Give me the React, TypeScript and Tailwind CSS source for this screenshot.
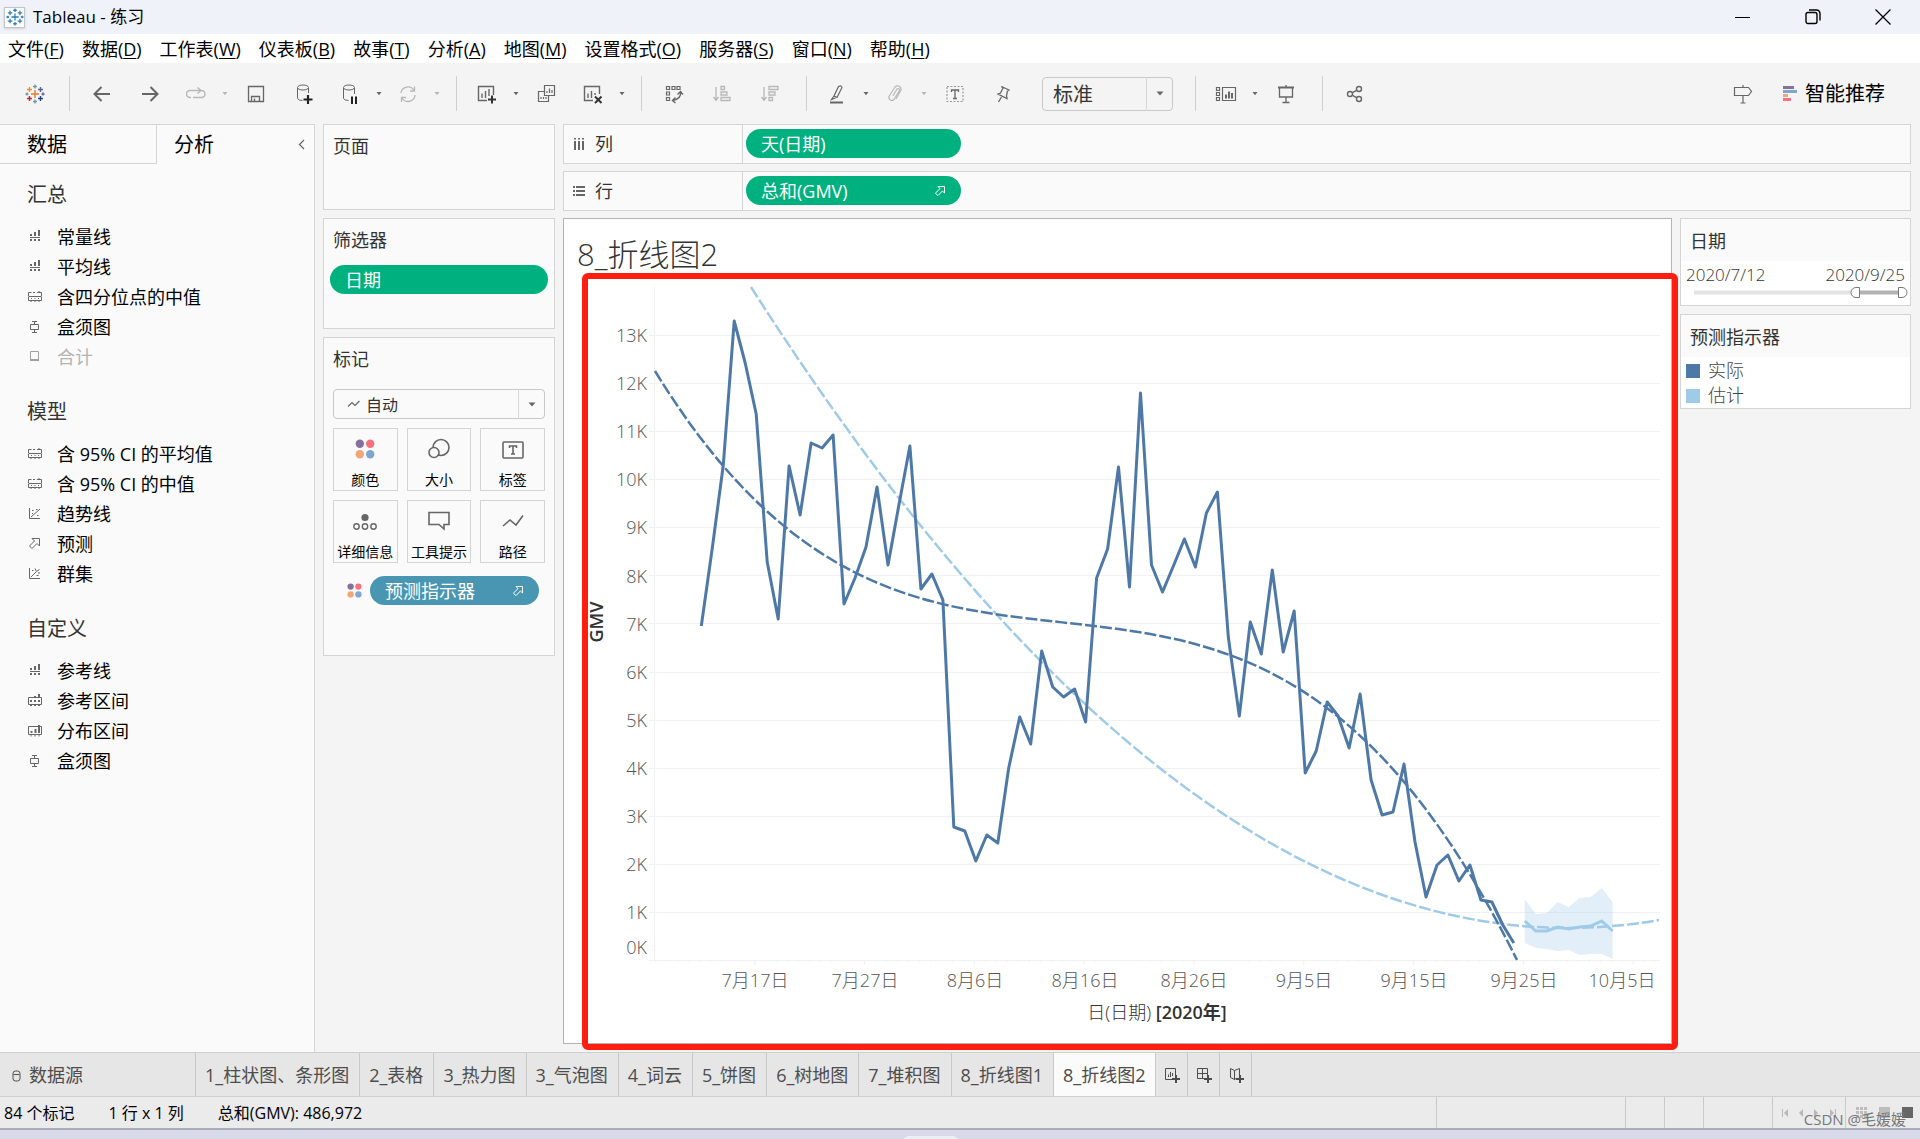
import { useState } from "react";
import type { ReactNode } from "react";

const menus = [
  ["文件", "F"],
  ["数据", "D"],
  ["工作表", "W"],
  ["仪表板", "B"],
  ["故事", "T"],
  ["分析", "A"],
  ["地图", "M"],
  ["设置格式", "O"],
  ["服务器", "S"],
  ["窗口", "N"],
  ["帮助", "H"],
];

const analytics = [
  {
    title: "汇总",
    items: [
      ["bars", "常量线"],
      ["bars", "平均线"],
      ["box", "含四分位点的中值"],
      ["whisker", "盒须图"],
      ["total", "合计"],
    ],
  },
  {
    title: "模型",
    items: [
      ["box", "含 95% CI 的平均值"],
      ["box", "含 95% CI 的中值"],
      ["trend", "趋势线"],
      ["forecast", "预测"],
      ["cluster", "群集"],
    ],
  },
  {
    title: "自定义",
    items: [
      ["bars", "参考线"],
      ["band", "参考区间"],
      ["dist", "分布区间"],
      ["whisker", "盒须图"],
    ],
  },
];

const sheets = [
  "1_柱状图、条形图",
  "2_表格",
  "3_热力图",
  "3_气泡图",
  "4_词云",
  "5_饼图",
  "6_树地图",
  "7_堆积图",
  "8_折线图1",
  "8_折线图2",
];

/* One y position per day, starting at 2020/7/12 */
const actual = [
  626, 548, 465, 321, 363, 414, 562, 619, 466, 515, 443, 448, 435, 604, 578,
  547, 487, 565, 505, 446, 589, 574, 600, 827, 831, 861, 835, 843, 768, 717,
  744, 651, 687, 697, 689, 722, 578, 549, 467, 587, 393, 565, 592, 566, 539,
  567, 513, 492, 637, 716, 622, 654, 570, 652, 611, 773, 751, 702, 716, 748,
  694, 780, 815, 812, 764, 842, 897, 865, 855, 881, 865, 900, 902, 925, 943,
];
const estimate = [921, 931, 931, 927, 929, 927, 926, 921, 931];
const upper = [899, 914, 913, 902, 907, 898, 897, 888, 902];
const lower = [943, 948, 949, 951, 950, 955, 954, 954, 959];

const dayX = (day: number) => 701.3 + day * 10.98;
const toPoints = (ys: number[], start = 0) =>
  ys.map((y, i) => `${dayX(start + i).toFixed(1)},${y}`);

const dateTicks = [
  [755, "7月17日"],
  [865, "7月27日"],
  [975, "8月6日"],
  [1085, "8月16日"],
  [1194, "8月26日"],
  [1304, "9月5日"],
  [1414, "9月15日"],
  [1524, "9月25日"],
  [1622, "10月5日"],
] as const;

function Svg({ w = 20, h = 20, className = "", children }: { w?: number; h?: number; className?: string; children: ReactNode }) {
  return (
    <svg
      width={w}
      height={h}
      viewBox={`0 0 ${w} ${h}`}
      fill="none"
      stroke="currentColor"
      className={"shrink-0 " + className}
      aria-hidden="true"
    >
      {children}
    </svg>
  );
}

function Tool({ label, caret, faded, children }: { label: string; caret?: boolean; faded?: boolean; children: ReactNode }) {
  const color = faded ? "text-[#b8b8b8]" : "text-[#666666]";
  return (
    <>
      <button
        aria-label={label}
        className={"flex h-9 items-center justify-center " + color + (caret ? " w-11" : " w-12")}
      >
        {children}
      </button>
      {caret && (
        <button aria-label={label + "选项"} className={"flex h-9 w-3.5 items-center justify-center " + color}>
          <Caret />
        </button>
      )}
    </>
  );
}

function Caret({ large }: { large?: boolean }) {
  return (
    <Svg w={8} h={5}>
      <path d={large ? "M.5.5h7L4 4.5z" : "M1.5 1h5L4 4.2z"} fill="currentColor" stroke="none" />
    </Svg>
  );
}

function Divider() {
  return <div className="mr-2 ml-3 h-[35px] w-px bg-[#d0d0d0]" />;
}

const crossCells = [
  [10, 10, 4, "#e8762c"],
  [4.5, 5.5, 2.5, "#eb912b"],
  [15.5, 5.5, 2.5, "#5c6692"],
  [4.5, 14.5, 2.5, "#c72035"],
  [15.5, 14.5, 2.5, "#1f447e"],
  [10, 2.5, 2, "#7199a6"],
  [10, 17.5, 2, "#7199a6"],
  [2, 10, 1.5, "#7199a6"],
  [18, 10, 1.5, "#5c6692"],
] as const;

function TableauLogo({ mono }: { mono?: boolean }) {
  return (
    <Svg className={mono ? "h-[18px] w-[18px]" : ""}>
      {crossCells.map(([x, y, r, color]) => (
        <path
          key={`${x}-${y}`}
          d={`M${x - r} ${y}h${r * 2}M${x} ${y - r}v${r * 2}`}
          stroke={mono ? "#2f80b5" : color}
          strokeWidth="1.4"
        />
      ))}
    </Svg>
  );
}

function ForecastIcon() {
  return (
    <Svg w={12} h={12}>
      <path d="M4 1.5h6.5V8L8.4 6 4 10.6 1.4 8.2 6 3.6z" />
    </Svg>
  );
}

function ColorDots({ small }: { small?: boolean }) {
  return (
    <Svg className={small ? "h-[15px] w-[15px]" : ""}>
      <g stroke="none">
        <circle cx="4.8" cy="4.8" r="4.2" fill="#86709c" />
        <circle cx="15.2" cy="4.8" r="4.2" fill="#f9707f" />
        <circle cx="4.8" cy="15.2" r="4.2" fill="#f2a577" />
        <circle cx="15.2" cy="15.2" r="4.2" fill="#80a5cf" />
      </g>
    </Svg>
  );
}

function AnalyticsIcon({ kind }: { kind: string }) {
  return (
    <Svg w={14} h={14}>
      {kind === "bars" && (
        <>
          <path d="M2 7.5h10" />
          <path d="M3 4v2M7 2v4M11 0v6M3 9v2M7 9v2M11 9v2" strokeWidth="2" />
        </>
      )}
      {kind === "box" && (
        <path d="M.5 6V2.5h3M5 2.5h2M9 2.5h4.5V6M.5 6.5h13M.5 7v3.5h13V7M3 8.5h1M6.5 8.5h1M10 8.5h1M3 10v2M7 10v2M11 10v2M11 1v2" />
      )}
      {kind === "band" && (
        <>
          <path d="M.5 3.5h13v7H.5z" />
          <path d="M3 6v2M7 6v2M11 6v2M7 2v2M11 0v4M3 10v2M7 10v2M11 10v2" strokeWidth="2" />
        </>
      )}
      {kind === "dist" && (
        <>
          <path d="M.5 2.5h13v8H.5zM3 11v1.5M7 11v1.5M11 11v1.5" />
          <path d="M3.5 7v2M7.5 5v4M11 1v8" strokeWidth="2" />
        </>
      )}
      {kind === "whisker" && <path d="M4 1.5h5M6.5 1.5V4M2.5 4.5h8v5h-8zM6.5 10v2M4 12.5h5" />}
      {kind === "total" && (
        <>
          <path d="M2.5 1.5h8v9h-8z" />
          <path d="M2 9h9v2H2z" fill="currentColor" stroke="none" />
        </>
      )}
      {kind === "trend" && <path d="M1.5 1v10.5H12M3 10l9-8M4 3.5h1.5M8 2.5h1.5M9 8.5h1.5M4 6.5h1" />}
      {kind === "cluster" && <path d="M1.5 1v10.5H12M3 10l5-5M4 3.5h1.5M7 1.5l1.5 3 3-2M10 6h2M8.5 8.5h2" />}
      {kind === "forecast" && <path d="M4 1.5h7.5V9L9 6.5l-5 5L1.5 9l5-5z" />}
    </Svg>
  );
}

function TitleBar() {
  return (
    <header className="flex h-[34px] items-center bg-[#f0f2f9] pl-1">
      <div className="flex h-[21px] w-[21px] items-center justify-center border border-[#c4c4c4] bg-white shadow">
        <TableauLogo mono />
      </div>
      <h1 className="ml-2 flex-1 text-[17px]">Tableau - 练习</h1>
      <div className="flex pr-[2px]">
        <button aria-label="最小化" className="flex h-8 w-[70px] items-center justify-center">
          <Svg w={16}>
            <path d="M0 10.5h15" />
          </Svg>
        </button>
        <button aria-label="还原" className="flex h-8 w-[70px] items-center justify-center">
          <Svg w={16} h={18}>
            <rect x="1" y="4.5" width="11" height="11" rx="2" strokeWidth="1.4" />
            <path d="M4 2h7.5a3.5 3.5 0 0 1 3.5 3.5v7" strokeWidth="1.4" />
          </Svg>
        </button>
        <button aria-label="关闭" className="flex h-8 w-[70px] items-center justify-center">
          <Svg w={16} h={16}>
            <path d="M.5.5l15 15M15.5.5l-15 15" strokeWidth="1.3" />
          </Svg>
        </button>
      </div>
    </header>
  );
}

function MenuBar() {
  return (
    <nav className="flex h-[29px] items-center gap-[18px] bg-white pl-2 text-[18px]">
      {menus.map(([name, key]) => (
        <button key={name} className="leading-[28px]">
          {name}(<span className="underline underline-offset-2">{key}</span>)
        </button>
      ))}
    </nav>
  );
}

function Toolbar() {
  return (
    <div className="flex h-[61px] items-center bg-[#f4f4f4]">
      <button aria-label="开始页面" className="flex h-9 w-[69px] items-center justify-center">
        <TableauLogo />
      </button>
      <div className="mr-2 h-[35px] w-px bg-[#d0d0d0]" />
      <Tool label="撤销">
        <Svg>
          <path d="M18 10H3M9.5 3L2.5 10l7 7" strokeWidth="2" />
        </Svg>
      </Tool>
      <Tool label="重做">
        <Svg>
          <path d="M2 10h15M10.5 3l7 7-7 7" strokeWidth="2" />
        </Svg>
      </Tool>
      <Tool label="重播" caret faded>
        <Svg>
          <path d="M5 13.5H4A3 3 0 0 1 4 6.5h10M15.5 6.5a3.5 3.5 0 0 1 0 7H7M11.5 3.5l3.5 3-3.5 3" strokeWidth="1.5" />
        </Svg>
      </Tool>
      <Tool label="保存">
        <Svg w={18} h={18}>
          <path d="M1.5 1.5h15v15h-15zM4.5 16.5v-5h8v5M7.5 13.5v3" strokeWidth="1.3" />
        </Svg>
      </Tool>
      <Tool label="新建数据源">
        <Svg w={20} h={22}>
          <ellipse cx="9" cy="4.5" rx="5.5" ry="2.5" />
          <path d="M3.5 5v10.5q1 2 5 2M14.5 5v5" />
          <path d="M9.5 16.5h9M14 12v9" stroke="#222" strokeWidth="2.2" />
        </Svg>
      </Tool>
      <Tool label="暂停自动更新" caret>
        <Svg w={20} h={22}>
          <ellipse cx="9" cy="4.5" rx="5.5" ry="2.5" />
          <path d="M3.5 5v10.5q1 2 5 2M14.5 5v6" />
          <path d="M12 13.5V21M16 13.5V21" stroke="#222" strokeWidth="2" />
        </Svg>
      </Tool>
      <Tool label="刷新" caret faded>
        <Svg>
          <path d="M3 9a7 7 0 0 1 13-2.5M17 11a7 7 0 0 1-13 3M16.5 2.5v4.5H12M3.5 18v-4.5H8" strokeWidth="1.3" />
        </Svg>
      </Tool>
      <Divider />
      <Tool label="新建工作表" caret>
        <Svg w={22} h={20}>
          <path d="M11 16.5H2.5v-14h15V11M6 9.5v4.5M9.5 7v7M13 5v7" strokeWidth="1.4" />
          <path d="M12 15.5h8M16 11.5v8" stroke="#333" strokeWidth="2" />
        </Svg>
      </Tool>
      <Tool label="复制">
        <Svg>
          <path d="M7.5 1.5h10v10h-10zM7 7.5H1.5v10h10v-6M10 9V7M12.5 9V4.5M15 9V6M4 15v-2M6.5 15v-2M9 15v-2" strokeWidth="1.2" />
        </Svg>
      </Tool>
      <Tool label="清除工作表" caret>
        <Svg w={22} h={20}>
          <path d="M11 16.5H2.5v-14h15V10M6 9.5v4.5M9.5 7v7M13 9v2" strokeWidth="1.4" />
          <path d="M13 12.5l6.5 6.5M19.5 12.5L13 19" stroke="#333" strokeWidth="2" />
        </Svg>
      </Tool>
      <Divider />
      <Tool label="交换行和列">
        <Svg>
          <path d="M2.5 2.5h3v3h-3zM8 2.5h3v3H8zM13 2.5h3v3h-3zM2.5 8h3v3h-3zM2.5 13.5h3v3h-3z" strokeWidth="1.2" />
          <path d="M16.5 8q1 7-8 8.5M13.5 10.5l3-3 2.5 3M11.5 13.5l-3 3 3 2.5" strokeWidth="1.4" />
        </Svg>
      </Tool>
      <Tool label="升序排序" faded>
        <Svg>
          <path d="M4 3v13M1.5 13L4 16.5 6.5 13M9 2.5h3.5v3H9zM9 8h6v3H9zM9 13.5h9v3H9z" strokeWidth="1.3" />
        </Svg>
      </Tool>
      <Tool label="降序排序" faded>
        <Svg>
          <path d="M4 3v13M1.5 13L4 16.5 6.5 13M9 2.5h9v3H9zM9 8h6v3H9zM9 13.5h3.5v3H9z" strokeWidth="1.3" />
        </Svg>
      </Tool>
      <Divider />
      <Tool label="突出显示" caret>
        <Svg>
          <path d="M11.5 2.5q3-1.5 3.5 1L10 13.5 7 12zM7 12l-2.5 3.5 4-1.5" strokeWidth="1.2" />
          <path d="M3 18.5h13" strokeWidth="2" />
        </Svg>
      </Tool>
      <Tool label="分组成员" caret faded>
        <Svg>
          <path d="M8 12l4-7a1.5 1.5 0 0 1 2.5 1.5L9 15.5a3 3 0 0 1-5-3L10 3a3.5 3.5 0 0 1 6 3l-5 9" strokeWidth="1.2" />
        </Svg>
      </Tool>
      <Tool label="显示标记标签">
        <Svg w={18} h={18}>
          <rect x="1" y="1.5" width="16" height="15" strokeDasharray="2 1.5" strokeWidth="1.2" className="text-[#999999]" />
          <path d="M5.5 7V5h7v2M9 5v8M7 13.5h4" strokeWidth="1.3" />
        </Svg>
      </Tool>
      <Tool label="固定轴">
        <Svg>
          <path d="M8.5 2.5l7.5 3.5-1.5 1-1 4.5.5 3-9-4.5 2.5-1 2.5-5zM8.5 13l-3 5" strokeWidth="1.3" />
        </Svg>
      </Tool>
      <div className="relative mr-2.5 ml-[15px]">
        <label htmlFor="fit" className="sr-only">
          适合
        </label>
        <select
          id="fit"
          className="block h-[34px] w-[131px] appearance-none rounded-sm border border-[#c8c8c8] bg-[#f4f4f4] pr-7 pl-2.5 font-['Noto_Sans_CJK_SC',sans-serif] text-[20px] leading-8 text-[#333333]"
        >
          <option>标准</option>
          <option>整个视图</option>
        </select>
        <span className="pointer-events-none absolute inset-y-0 right-0 flex w-[27px] items-center justify-center border-l border-[#d8d8d8] text-[#666666]">
          <Caret large />
        </span>
      </div>
      <Divider />
      <Tool label="显示/隐藏卡" caret>
        <Svg w={22}>
          <path d="M1.5 3.5h3v3h-3zM1.5 8.5h3v3h-3zM1.5 13.5h3v3h-3zM7.5 3.5h13v13h-13z" strokeWidth="1.2" />
          <path d="M11 14.5v-4M14 14.5v-7M17 14.5V9" strokeWidth="2" />
        </Svg>
      </Tool>
      <Tool label="演示模式">
        <Svg>
          <path d="M2 3.5h16" strokeWidth="2" />
          <path d="M3.5 4v9h13V4M10 13v5M6.5 18.5h7M10 1v2" strokeWidth="1.3" />
        </Svg>
      </Tool>
      <Divider />
      <Tool label="共享">
        <Svg>
          <circle cx="5" cy="10" r="2.5" strokeWidth="1.4" />
          <circle cx="14" cy="5" r="2.5" strokeWidth="1.4" />
          <circle cx="14" cy="15" r="2.5" strokeWidth="1.4" />
          <path d="M7 8.8l5-2.6M7 11.2l5 2.6" strokeWidth="1.4" />
        </Svg>
      </Tool>
      <div className="ml-auto flex items-center pr-[35px]">
        <Tool label="数据指南">
          <Svg>
            <path d="M1.5 3.5h14l3 4-3 4h-14zM10 1v2M10 12v7M7.5 19h5" strokeWidth="1.2" />
          </Svg>
        </Tool>
        <button className="ml-4 flex items-center gap-2 text-[20px]">
          <Svg w={14} h={16}>
            <g stroke="none">
              <path d="M0 0h11v3H0z" fill="#86709c" />
              <path d="M0 4h14v3H0z" fill="#80a5cf" />
              <path d="M0 8h5v3H0z" fill="#f2a577" />
              <path d="M0 12h8v3H0z" fill="#f9707f" />
            </g>
          </Svg>
          智能推荐
        </button>
      </div>
    </div>
  );
}

function AnalyticsPane() {
  return (
    <aside className="w-[315px] shrink-0 border-t border-r border-[#d4d4d4] bg-[#fafafa]">
      <div className="flex h-[39px] text-[20px] leading-[40px]">
        <button className="w-[157px] border-r border-b border-[#d4d4d4] pl-[27px] text-left">数据</button>
        <button className="flex-1 pl-[17px] text-left">分析</button>
        <button aria-label="折叠" className="flex w-5 items-center pl-1 text-[#666666]">
          <Svg w={8} h={12}>
            <path d="M6 1L1.5 5.5 6 10" strokeWidth="1.2" />
          </Svg>
        </button>
      </div>
      {analytics.map((group) => (
        <section key={group.title} className="pt-4 pb-2">
          <h2 className="mb-3 pl-[27px] text-[20px] leading-[30px] text-[#333333]">{group.title}</h2>
          <ul className="pb-px">
            {group.items.map(([kind, label]) => (
              <li
                key={label}
                className={
                  "flex h-[30px] items-center gap-[15px] pl-[28px] text-[18px] " +
                  (kind === "total" ? "text-[#b4b4b4]" : "")
                }
              >
                <span className={kind === "total" ? "text-[#a0a0a0]" : "text-[#666666]"}>
                  <AnalyticsIcon kind={kind} />
                </span>
                {label}
              </li>
            ))}
          </ul>
        </section>
      ))}
    </aside>
  );
}

function MarkButton({ label, children }: { label: string; children: ReactNode }) {
  return (
    <button className="flex h-[63px] flex-col items-center justify-between border border-[#d4d4d4] text-[14px] leading-5 text-black">
      <span className="flex h-9 items-end justify-center pb-1.5 text-[#666666]">{children}</span>
      <span className="whitespace-nowrap">{label}</span>
    </button>
  );
}

function CardColumn() {
  return (
    <div className="flex w-[232px] shrink-0 flex-col gap-2 text-[18px] leading-7 text-[#333333]">
      <section className="h-[86px] border border-[#d4d4d4] bg-[#fafafa] px-[9px] pt-[7px]">
        <h2>页面</h2>
      </section>
      <section className="h-[111px] border border-[#d4d4d4] bg-[#fafafa] px-1.5 pt-[7px]">
        <h2 className="pl-[3px]">筛选器</h2>
        <button className="mt-[11px] block h-[29px] w-full rounded-full bg-[#00b180] pl-[15px] text-left text-white">
          日期
        </button>
      </section>
      <section className="h-[319px] border border-[#d4d4d4] bg-[#fafafa] px-[9px] pt-[7px]">
        <h2>标记</h2>
        <div className="relative mt-4">
          <label htmlFor="mark-type" className="sr-only">
            标记类型
          </label>
          <select
            id="mark-type"
            className="block h-[30px] w-full appearance-none rounded-sm border border-[#c8c8c8] pr-7 pl-8 font-['Noto_Sans_CJK_SC',sans-serif] text-[16px] leading-7"
          >
            <option>自动</option>
            <option>线</option>
          </select>
          <span className="pointer-events-none absolute inset-y-0 left-3.5 flex items-center text-[#666666]">
            <Svg w={13} h={8}>
              <path d="M1 6.5l4-4 3 3L12.5 1" strokeWidth="1.2" />
            </Svg>
          </span>
          <span className="pointer-events-none absolute inset-y-0 right-0 flex w-[27px] items-center justify-center border-l border-[#d8d8d8] text-[#666666]">
            <Caret large />
          </span>
        </div>
        <div className="mt-[9px] grid grid-cols-3 gap-[9px]">
          <MarkButton label="颜色">
            <ColorDots />
          </MarkButton>
          <MarkButton label="大小">
            <Svg w={24} h={21}>
              <circle cx="14" cy="9.5" r="8" strokeWidth="1.6" />
              <circle cx="7" cy="14.5" r="5" strokeWidth="1.6" fill="#fafafa" />
            </Svg>
          </MarkButton>
          <MarkButton label="标签">
            <Svg w={22} h={18}>
              <rect x="1" y="1" width="20" height="16" rx="1" strokeWidth="1.6" />
              <path d="M7.5 7V5h7v2M11 5v8M9 13h4" strokeWidth="1.6" />
            </Svg>
          </MarkButton>
          <MarkButton label="详细信息">
            <Svg w={24} h={18}>
              <circle cx="12" cy="4.5" r="3.6" fill="currentColor" stroke="none" />
              <circle cx="3.5" cy="13.5" r="2.7" strokeWidth="1.4" />
              <circle cx="12" cy="13.5" r="2.7" strokeWidth="1.4" />
              <circle cx="20.5" cy="13.5" r="2.7" strokeWidth="1.4" />
            </Svg>
          </MarkButton>
          <MarkButton label="工具提示">
            <Svg w={22} h={20}>
              <path d="M1 1.5h20v12h-5V18l-5-4.5H1z" strokeWidth="1.6" />
            </Svg>
          </MarkButton>
          <MarkButton label="路径">
            <Svg w={22} h={18}>
              <path d="M1 13l7-6 6 5 7-9.5" strokeWidth="1.6" />
            </Svg>
          </MarkButton>
        </div>
        <div className="mt-[13px] flex items-center pl-3.5">
          <ColorDots small />
          <button className="mr-1.5 ml-2 flex h-[29px] flex-1 items-center justify-between rounded-full bg-[#4996b2] px-[15px] text-white">
            预测指示器
            <ForecastIcon />
          </button>
        </div>
      </section>
    </div>
  );
}

function Shelf({ label, icon, children }: { label: string; icon: ReactNode; children: ReactNode }) {
  return (
    <section className="flex h-10 border border-[#d4d4d4] bg-[#fafafa] text-[18px] leading-7">
      <h2 className="flex w-[179px] items-center gap-2.5 border-r border-[#d4d4d4] pl-[9px] text-[#333333]">
        <span className="text-[#666666]">{icon}</span>
        {label}
      </h2>
      <div className="flex items-start pt-1 pl-[3px]">{children}</div>
    </section>
  );
}

function LineChart() {
  return (
    <svg viewBox="564 281 1107 762" className="block w-full" role="img" aria-label="GMV 折线图">
      <g stroke="#f1f1f1" strokeWidth="1" fill="none">
        {Array.from({ length: 13 }, (_, i) => (
          <path key={i} d={`M649 ${Math.round(911.8 - i * 48.06) + 0.5}H1660`} />
        ))}
        <path d="M654.5 287V961M649 960.5H1660" />
        {Array.from({ length: 92 }, (_, i) => (
          <path key={i} d={`M${(656 + i * 10.98).toFixed(1)} 960v${i % 10 === 9 ? 5 : 2}`} />
        ))}
      </g>

      <polygon
        points={[...toPoints(upper, 75), ...toPoints(lower, 75).reverse()].join(" ")}
        fill="#a0cbe8"
        fillOpacity="0.3"
      />
      <g fill="none" strokeWidth="2.5">
        <path d="M751 287C1053.7 762 1356.3 973 1659 920" stroke="#a0cbe8" strokeDasharray="12 3" />
        <path d="M655 371C942.3 840.3 1229.7 382.7 1517 960" stroke="#4e79a7" strokeDasharray="12 3" />
        <polyline points={toPoints(actual).join(" ")} stroke="#4e79a7" strokeWidth="3" strokeLinejoin="round" />
        <polyline points={toPoints(estimate, 75).join(" ")} stroke="#a0cbe8" strokeWidth="3" />
      </g>

      <g className="text-[18px] font-light" fill="#555555">
        {Array.from({ length: 14 }, (_, i) => (
          <text key={i} x="647" y={i === 0 ? 954 : Math.round(967 - i * 48.06)} textAnchor="end">
            {i}K
          </text>
        ))}
        {dateTicks.map(([x, label]) => (
          <text key={label} x={x} y="987" textAnchor="middle">
            {label}
          </text>
        ))}
      </g>
      <g className="text-[18px]" fill="#333333" textAnchor="middle">
        <text x="1157" y="1019" className="font-light">
          日(日期) <tspan className="font-semibold">[2020年]</tspan>
        </text>
        <text transform="translate(603 622) rotate(-90)" className="font-semibold">
          GMV
        </text>
      </g>
    </svg>
  );
}

function DateFilter() {
  const [from, setFrom] = useState(66);
  const [to, setTo] = useState(100);
  return (
    <section className="border border-[#d4d4d4] bg-white">
      <h2 className="h-[42px] bg-[#fafafa] pl-[9px] text-[18px] leading-[44px] text-[#333333]">日期</h2>
      <div className="flex justify-between px-[5px] pt-[2px] text-[17px] leading-6 font-light text-[#333333]">
        <span>2020/7/12</span>
        <span>2020/9/25</span>
      </div>
      <div className="relative mr-1 ml-3 h-[18px]">
        <Svg w={215} h={12}>
          <path d="M1 5.5h165" stroke="#e3e3e3" strokeWidth="4" />
          <path d="M166 5.5h40" stroke="#b3b3b3" strokeWidth="4" />
          <path d="M166.5.5H163a5 5 0 0 0 0 10h3.5z" fill="#fff" stroke="#777" />
          <path d="M205.5.5h3.5a5 5 0 0 1 0 10h-3.5z" fill="#fff" stroke="#777" />
        </Svg>
        <input
          type="range"
          aria-label="开始日期"
          value={from}
          onChange={(e) => setFrom(Number(e.target.value))}
          className="absolute top-0 left-0 h-3 w-1/2 opacity-0"
        />
        <input
          type="range"
          aria-label="结束日期"
          value={to}
          onChange={(e) => setTo(Number(e.target.value))}
          className="absolute top-0 right-0 h-3 w-1/2 opacity-0"
        />
      </div>
    </section>
  );
}

function SideCards() {
  return (
    <div className="flex w-[231px] shrink-0 flex-col gap-2">
      <DateFilter />
      <section className="border border-[#d4d4d4] bg-white">
        <h2 className="h-[42px] bg-[#fafafa] pl-[9px] text-[18px] leading-[44px] text-[#333333]">预测指示器</h2>
        <ul className="pt-px text-[18px] leading-[25px] font-light text-[#444444]">
          <li className="flex items-center gap-2 pl-[5px]">
            <span className="h-3.5 w-3.5 bg-[#4e79a7]" />
            实际
          </li>
          <li className="flex items-center gap-2 pl-[5px]">
            <span className="h-3.5 w-3.5 bg-[#a0cbe8]" />
            估计
          </li>
        </ul>
      </section>
    </div>
  );
}

function Workspace() {
  return (
    <div className="flex min-w-0 flex-1 flex-col gap-[7px]">
      <Shelf
        label="列"
        icon={
          <Svg w={12} h={14}>
            <path d="M2 1v1.5M6 1v1.5M10 1v1.5M2 4v9M6 4v9M10 4v9" strokeWidth="2" />
          </Svg>
        }
      >
        <button className="h-[29px] w-[215px] rounded-full bg-[#00b180] pl-[15px] text-left text-white">天(日期)</button>
      </Shelf>
      <Shelf
        label="行"
        icon={
          <Svg w={12} h={14}>
            <path d="M0 3h2M0 7h2M0 11h2M3 3h9M3 7h9M3 11h9" strokeWidth="2" />
          </Svg>
        }
      >
        <button className="flex h-[29px] w-[215px] items-center justify-between rounded-full bg-[#00b180] px-[15px] text-white">
          总和(GMV)
          <ForecastIcon />
        </button>
      </Shelf>
      <div className="flex items-start gap-2">
        <section className="relative min-w-0 flex-1 border border-[#b4b4b4] bg-white">
          <h2 className="h-[62px] pt-2.5 pl-[13px] text-[31px] leading-[50px] font-light text-[#333333]">8_折线图2</h2>
          <LineChart />
          {/* highlight frame around the chart */}
          <div className="pointer-events-none absolute top-[54px] -right-[7px] -bottom-[7px] left-[18px] rounded-md border-[6px] border-[#ff1e10]" />
        </section>
        <SideCards />
      </div>
    </div>
  );
}

function SheetTabs() {
  return (
    <div className="flex h-[45px] border-t border-b border-[#cfcfcf] bg-[#e6e6e6] text-[18px] text-[#4d4d4d]">
      <button className="flex w-[196px] items-center gap-2 border-r border-[#c8c8c8] pt-0.5 pl-3">
        <Svg w={9} h={12}>
          <rect x="1" y="1" width="7" height="10" rx="2.5" />
          <path d="M1.5 4.5h6" />
        </Svg>
        数据源
      </button>
      {sheets.map((name) => (
        <button
          key={name}
          className={
            "border-r border-[#c8c8c8] pt-0.5 pr-2.5 pl-[9px] " + (name === "8_折线图2" ? "bg-[#fbfbfb]" : "")
          }
        >
          {name}
        </button>
      ))}
      <button aria-label="新建工作表" className="flex w-8 items-center justify-center border-r border-[#c8c8c8]">
        <Svg w={16} h={16}>
          <path d="M8 12.5H1.5v-11h10V8M4.5 10V7.5M6.5 10V5M8.5 9V6" />
          <path d="M8 12h8M12 8v8" strokeWidth="2" />
        </Svg>
      </button>
      <button aria-label="新建仪表板" className="flex w-8 items-center justify-center border-r border-[#c8c8c8]">
        <Svg w={16} h={16}>
          <path d="M8 11.5H1.5v-10h10V8M6.5 1.5v10M1.5 6.5h10" />
          <path d="M8 12h8M12 8v8" strokeWidth="2" />
        </Svg>
      </button>
      <button aria-label="新建故事" className="flex w-8 items-center justify-center border-r border-[#c8c8c8]">
        <Svg w={16} h={16}>
          <path d="M8 11.5l-1.5 1-4-2v-9l4 2 5-2V8M6.5 3.5v9" />
          <path d="M8 12h8M12 8v8" strokeWidth="2" />
        </Svg>
      </button>
    </div>
  );
}

function StatusBar() {
  return (
    <footer className="relative flex h-[33px] border-b-2 border-[#a9abb8] bg-[#ebebeb] text-[16px] leading-[33px]">
      <span className="pl-1">84 个标记</span>
      <span className="pl-[34px]">1 行 x 1 列</span>
      <span className="flex-1 pl-[34px]">总和(GMV): 486,972</span>
      <div className="w-[189px] border-l border-[#cacaca]" />
      <div className="w-[39px] border-l border-[#cacaca]" />
      <div className="w-[39px] border-l border-[#cacaca]" />
      <div className="w-[69px] border-l border-[#cacaca]" />
      <div className="flex w-[73px] items-center justify-center border-l border-[#cacaca] text-[#b8b8b8]">
        <Svg w={58} h={10}>
          <g fill="currentColor" stroke="none">
            <path d="M2 1h1v8H2zM8 1v8L4 5zM23 1v8l-4-4zM34 1v8l4-4zM50 1v8l4-4zM55 1h1v8h-1z" />
          </g>
        </Svg>
      </div>
      <div className="flex w-[75px] items-center gap-3 border-l border-[#cacaca] pl-2.5 text-[#bdbdbd]">
        <Svg w={11} h={11}>
          <path d="M0 1.5h11M0 5.5h11M0 9.5h11" strokeWidth="3" strokeDasharray="3 1" />
        </Svg>
        <span className="h-[11px] w-[11px] bg-[#bdbdbd]" />
        <span className="h-[11px] w-[11px] bg-[#666666]" />
      </div>
      <span className="absolute right-[14px] -bottom-2 text-[15px] text-[#777777]">CSDN @毛媛媛</span>
    </footer>
  );
}

export default function App() {
  return (
    <div className="flex min-h-screen flex-col bg-[#f4f4f4] font-['Open_Sans','Noto_Sans_CJK_SC',sans-serif] text-black">
      <TitleBar />
      <MenuBar />
      <Toolbar />
      <main className="flex flex-1 gap-2 pr-[9px]">
        <AnalyticsPane />
        <CardColumn />
        <Workspace />
      </main>
      <SheetTabs />
      <StatusBar />
      <div className="flex h-[9px] justify-center overflow-hidden bg-[#d8dae9]">
        <div className="mt-1.5 mr-[58px] h-3 w-14 rounded-md bg-[#eceef6]" />
      </div>
    </div>
  );
}
